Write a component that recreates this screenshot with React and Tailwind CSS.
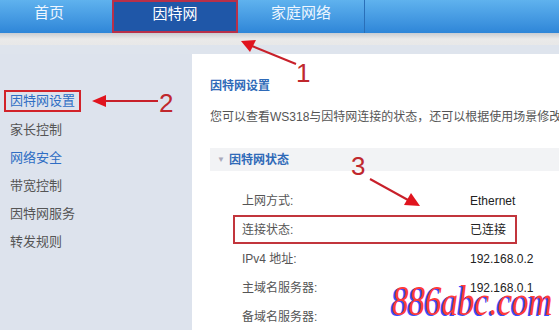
import React from 'react';

const CN = { fontFamily: '"Liberation Sans", "Noto Sans CJK SC", sans-serif' };

const SIDE = [
  { label: '因特网设置', active: true },
  { label: '家长控制' },
  { label: '网络安全', blue: true },
  { label: '带宽控制' },
  { label: '因特网服务' },
  { label: '转发规则' },
];

const ROWS = [
  ['上网方式:', 'Ethernet'],
  ['连接状态:', '已连接', true],
  ['IPv4 地址:', '192.168.0.2'],
  ['主域名服务器:', '192.168.0.1'],
  ['备域名服务器:', ''],
];

const Arrows = () => (
  <svg className="absolute inset-0 pointer-events-none" width="559" height="330">
    <g stroke="#c8202a" strokeWidth="2" fill="#e0141e">
      <line x1="296" y1="64" x2="252" y2="46" />
      <polygon points="241,41 256,40 250,52" stroke="none" />
      <line x1="158" y1="101" x2="104" y2="101" />
      <polygon points="92,101 106,95 106,107" stroke="none" />
      <line x1="370" y1="179" x2="408" y2="200" />
      <polygon points="420,206 404,205 411,193" stroke="none" />
    </g>
  </svg>
);

export default function App() {
  return (
    <div className="relative w-[559px] h-[330px] overflow-hidden bg-[#dde3ed]" style={CN}>
      {/* top nav */}
      <div className="flex h-[33px] bg-gradient-to-b from-[#5fb2ee] to-[#2e86d8] text-white text-[15px]">
        <div className="w-[112px] flex items-center justify-center pb-[6px] pr-[14px] text-[#eef6ff]">首页</div>
        <div className="w-[126px] flex items-center justify-center pb-[4px] bg-[#1f57a8] border-2 border-[#b8304a]">因特网</div>
        <div className="w-[127px] flex items-center justify-center pb-[6px] border-r border-[#2a6fb8] text-[#eef6ff]">家庭网络</div>
        <div className="flex-1" />
      </div>
      <div className="h-[12px] bg-gradient-to-b from-[#c9cdd2] via-[#eaeaea] to-[#e8e8e8]" />
      <div className="h-[9px] bg-[#dee4ed]" />

      <div className="flex h-[276px]">
        {/* sidebar */}
        <div className="w-[192px] pt-[37px] pl-[4px]">
          {SIDE.map(s => (
            <div key={s.label} className="h-[28px] flex items-start">
              <span
                className={`text-[13px] leading-[16px] px-[4px] py-[1px] ${
                  s.active ? 'border-2 border-[#d2232a] text-[#2f6ec4] -mt-[1px]' : s.blue ? 'text-[#2f6ec4] border-2 border-transparent' : 'text-[#555] border-2 border-transparent'
                }`}
              >
                {s.label}
              </span>
            </div>
          ))}
        </div>

        {/* main */}
        <div className="flex-1 bg-white pl-[18px] pt-[25px] overflow-hidden">
          <div className="text-[12px] leading-[14px] font-bold text-[#2f6ab8]">因特网设置</div>
          <div className="mt-[17px] text-[12px] leading-[14px] text-[#555] whitespace-nowrap">
            您可以查看WS318与因特网连接的状态，还可以根据使用场景修改因特网设置
          </div>
          <div className="mt-[24px] h-[23px] bg-[#f2f3f5] flex items-center pl-[7px]">
            <span className="text-[#aab] text-[8px] mr-[4px]">▼</span>
            <span className="text-[12px] font-bold text-[#2f6ab8]">因特网状态</span>
          </div>
          <div className="pt-[15px] pl-[32px] w-[307px]">
            {ROWS.map(([k, v, hl]) => (
              <div
                key={k}
                className={`h-[29px] flex items-center text-[12px] ${hl ? 'border-2 border-[#c2353c] -ml-[9px] pl-[7px]' : ''}`}
              >
                <span className="w-[228px] shrink-0 text-[#555]">{k}</span>
                <span className="text-[#222]">{v}</span>
              </div>
            ))}
          </div>
        </div>
      </div>

      {/* annotations */}
      <Arrows />
      <div className="absolute left-[296px] top-[60px] text-[26px] leading-none text-[#c0282d]" style={{ fontFamily: '"Liberation Sans", sans-serif' }}>1</div>
      <div className="absolute left-[159px] top-[90px] text-[26px] leading-none text-[#c0282d]" style={{ fontFamily: '"Liberation Sans", sans-serif' }}>2</div>
      <div className="absolute left-[351px] top-[153px] text-[26px] leading-none text-[#c0282d]" style={{ fontFamily: '"Liberation Sans", sans-serif' }}>3</div>
      <div
        className="absolute left-[392px] top-[281px] text-[33px] leading-none italic text-[#ff3b3b] [text-shadow:-2px_1px_0_#3a4cff] scale-y-[1.25] origin-top"
        style={{ fontFamily: '"Liberation Serif", serif' }}
      >
        886abc.com
      </div>
    </div>
  );
}
